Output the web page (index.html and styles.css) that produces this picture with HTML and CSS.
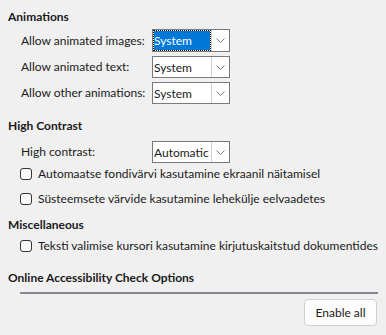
FILE: index.html
```html
<!DOCTYPE html>
<html lang="et">
<head>
  <meta charset="UTF-8">
  <title>Accessibility</title>
  <link rel="stylesheet" href="styles.css">
</head>
<body>

  <!-- Animations -->
  <section class="group">
    <h2 class="group-title">Animations</h2>
    <div class="form-rows">
      <label class="row-label">Allow animated images:</label>
      <div class="combo focused">
        <span class="combo-value"><span class="sel">System</span></span>
        <span class="combo-btn"><svg width="9" height="5" viewBox="0 0 9 5"><path d="M0.5 0.5 L4.5 4.5 L8.5 0.5" fill="none" stroke="#777" stroke-width="1"/></svg></span>
      </div>

      <label class="row-label">Allow animated text:</label>
      <div class="combo">
        <span class="combo-value">System</span>
        <span class="combo-btn"><svg width="9" height="5" viewBox="0 0 9 5"><path d="M0.5 0.5 L4.5 4.5 L8.5 0.5" fill="none" stroke="#777" stroke-width="1"/></svg></span>
      </div>

      <label class="row-label">Allow other animations:</label>
      <div class="combo">
        <span class="combo-value">System</span>
        <span class="combo-btn"><svg width="9" height="5" viewBox="0 0 9 5"><path d="M0.5 0.5 L4.5 4.5 L8.5 0.5" fill="none" stroke="#777" stroke-width="1"/></svg></span>
      </div>
    </div>
  </section>

  <!-- High contrast -->
  <section class="group contrast">
    <h2 class="group-title">High Contrast</h2>
    <div class="form-rows">
      <label class="row-label">High contrast:</label>
      <div class="combo">
        <span class="combo-value">Automatic</span>
        <span class="combo-btn"><svg width="9" height="5" viewBox="0 0 9 5"><path d="M0.5 0.5 L4.5 4.5 L8.5 0.5" fill="none" stroke="#777" stroke-width="1"/></svg></span>
      </div>
    </div>
    <label class="check"><span class="box"></span>Automaatse fondivärvi kasutamine ekraanil näitamisel</label>
    <label class="check"><span class="box"></span>Süsteemsete värvide kasutamine lehekülje eelvaadetes</label>
  </section>

  <!-- Misc -->
  <section class="group misc">
    <h2 class="group-title">Miscellaneous</h2>
    <label class="check"><span class="box"></span>Teksti valimise kursori kasutamine kirjutuskaitstud dokumentides</label>
  </section>

  <section class="group online">
    <h2 class="group-title">Online Accessibility Check Options</h2>
    <div class="separator"></div>
    <div class="actions">
      <button class="btn">Enable all</button>
    </div>
  </section>

</body>
</html>
```

FILE: styles.css
```css
body {
  margin: 0;
  padding: 0 8px 0 8px;
  background-color: #f0f0f0;
  font-family: Lato, "Liberation Sans", sans-serif;
  font-size: 12px;
  color: #1a1a1a;
  width: 370px;
  white-space: nowrap;
}

.group-title {
  margin: 0;
  font-size: 12px;
  font-weight: 700;
  line-height: 16px;
}

.group {
  padding-top: 9px;
}

.group.contrast {
  padding-top: 14px;
}

.group.misc {
  padding-top: 10px;
}

.group.online {
  padding-top: 16px;
}

.form-rows {
  display: grid;
  grid-template-columns: 131px 78px;
  row-gap: 4px;
  padding-left: 13px;
  padding-top: 4px;
  align-items: center;
}

.contrast .form-rows {
  padding-top: 7px;
}

.row-label {
  line-height: 16px;
}

.combo {
  display: flex;
  height: 22px;
  box-sizing: border-box;
  border: 1px solid #7a7a7a;
  background-color: #fff;
}

.combo.focused {
  height: 23px;
}

.combo-value {
  flex: 1;
  display: flex;
  align-items: center;
  padding-left: 1px;
}

.combo.focused .combo-value {
  padding: 1px;
}

.sel {
  flex: 1;
  align-self: stretch;
  display: flex;
  align-items: center;
  background-color: #0078d7;
  color: #fff;
  outline: 1px dotted #000;
}

.combo-btn {
  width: 16px;
  margin: 0 1px 0 0;
  border-left: 1px solid #cfcfcf;
  display: flex;
  align-items: center;
  justify-content: center;
}

.check {
  display: flex;
  align-items: center;
  margin-left: 12px;
  margin-top: 9px;
  line-height: 16px;
}

.contrast .check:first-of-type {
  margin-top: 3px;
}

.box {
  width: 12px;
  height: 12px;
  border: 1px solid #333;
  border-radius: 3px;
  background-color: #fbfbfb;
  margin-right: 6px;
  box-sizing: border-box;
}

.misc .check {
  margin-top: 5px;
}

.separator {
  height: 2px;
  background-color: #858a92;
  margin: 6px 0 0 12px;
}

.actions {
  display: flex;
  justify-content: flex-end;
  padding: 5px 1px 0 0;
}

.btn {
  font-family: inherit;
  font-size: 12px;
  color: #1a1a1a;
  width: 73px;
  height: 27px;
  background-color: #fdfdfd;
  border: 1px solid #d0d0d0;
  border-radius: 4px;
}
```
